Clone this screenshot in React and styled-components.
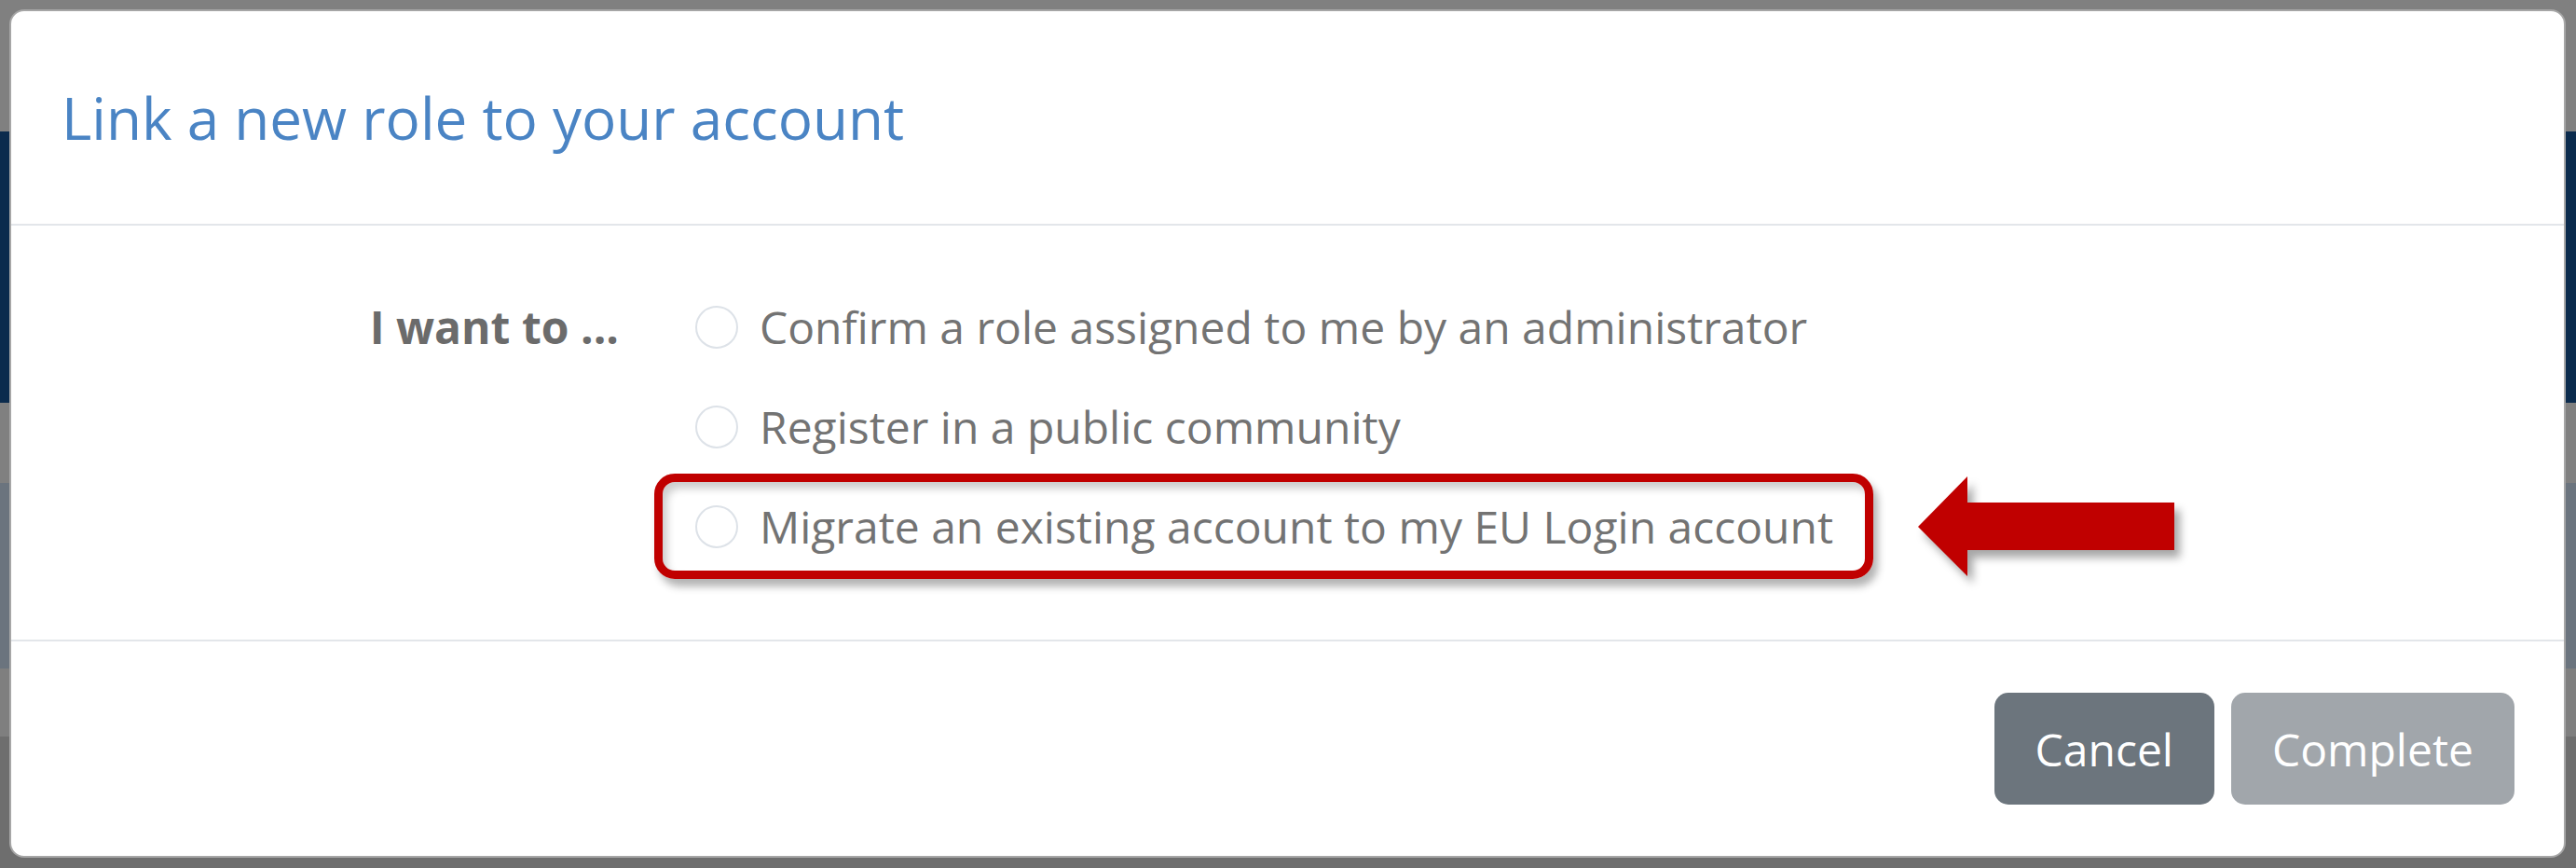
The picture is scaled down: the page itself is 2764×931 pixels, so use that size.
import styled, { createGlobalStyle } from 'styled-components'

const GlobalStyle = createGlobalStyle`
  html, body {
    margin: 0;
    padding: 0;
  }
  body {
    font-family: 'Open Sans', 'Liberation Sans', sans-serif;
    background: linear-gradient(
      to bottom,
      #808080 0 141px,
      #0b2b4d 141px 432px,
      #808080 432px 518px,
      #6b747e 518px 717px,
      #7f7f7f 717px 790px,
      #6e6e6e 790px
    );
    min-height: 931px;
  }
`

const Page = styled.div`
  width: 2764px;
  height: 931px;
  box-sizing: border-box;
  padding: 10px 11px 11px 10px;
`

const Modal = styled.div`
  box-sizing: border-box;
  width: 2743px;
  height: 910px;
  background: #fff;
  border: 2px solid rgba(0, 0, 0, 0.35);
  border-radius: 16px;
  display: flex;
  flex-direction: column;
  overflow: hidden;
`

const Header = styled.div`
  height: 228px;
  display: flex;
  align-items: center;
  padding-left: 54px;
  border-bottom: 2px solid #e3e6ea;
`

const Title = styled.h1`
  margin: 0;
  font-size: 62px;
  font-weight: 400;
  color: #4a84c4;
  line-height: 1.2;
`

const Body = styled.div`
  display: grid;
  grid-template-columns: 652px auto;
  column-gap: 82px;
  align-items: start;
  padding: 55px 0 0 0;
  height: 446px;
  box-sizing: border-box;
  border-bottom: 2px solid #e3e6ea;
`

const Label = styled.div`
  text-align: right;
  font-size: 48px;
  font-weight: 700;
  color: #6b6b6b;
  line-height: 107px;
`

const Options = styled.div`
  display: flex;
  flex-direction: column;
`

const Row = styled.div`
  display: flex;
  align-items: center;
  height: 107px;
  gap: 48px;
`

const Option = styled.label`
  display: inline-flex;
  align-items: center;
  gap: 23px;
  box-sizing: border-box;
  font-size: 48px;
  color: #737373;
  line-height: 1.4;
  ${({ $highlight }) => $highlight && `
    height: 113px;
    margin: -3px 0 -3px -44px;
    padding: 0 34px 0 35px;
    border: 9px solid #c00000;
    border-radius: 22px;
    box-shadow: 5px 8px 9px rgba(0, 0, 0, 0.3),
      inset 5px 7px 9px rgba(0, 0, 0, 0.2);
  `}
`

const Radio = styled.span`
  width: 46px;
  height: 46px;
  box-sizing: border-box;
  border: 2px solid #dde2e8;
  border-radius: 50%;
  flex: 0 0 auto;
`

const Arrow = styled.svg`
  width: 275px;
  height: 107px;
  flex: 0 0 auto;
  filter: drop-shadow(6px 8px 5px rgba(0, 0, 0, 0.35));
`

const Footer = styled.div`
  flex: 1;
  display: flex;
  align-items: center;
  justify-content: flex-end;
  gap: 18px;
  padding-right: 53px;
`

const Button = styled.button`
  height: 120px;
  padding: 0 44px;
  border: none;
  border-radius: 15px;
  font-family: 'Open Sans', 'Liberation Sans', sans-serif;
  font-size: 48px;
  color: #fff;
  background: ${({ $disabled }) => ($disabled ? '#a1a6ab' : '#6c757d')};
  cursor: ${({ $disabled }) => ($disabled ? 'default' : 'pointer')};
`

const options = [
  'Confirm a role assigned to me by an administrator',
  'Register in a public community',
  'Migrate an existing account to my EU Login account'
]

export default function App () {
  return (
    <>
      <GlobalStyle />
      <Page>
        <Modal>
          <Header>
            <Title>Link a new role to your account</Title>
          </Header>
          <Body>
            <Label>I want to ...</Label>
            <Options>
              {options.map((text, i) => {
                const highlight = i === options.length - 1
                return (
                  <Row key={text}>
                    <Option $highlight={highlight}>
                      <Radio />
                      {text}
                    </Option>
                    {highlight && (
                      <Arrow viewBox="0 0 275 107">
                        <polygon
                          points="0,54 53,0 53,28 275,28 275,79 53,79 53,107"
                          fill="#c00000"
                        />
                      </Arrow>
                    )}
                  </Row>
                )
              })}
            </Options>
          </Body>
          <Footer>
            <Button>Cancel</Button>
            <Button $disabled>Complete</Button>
          </Footer>
        </Modal>
      </Page>
    </>
  )
}
